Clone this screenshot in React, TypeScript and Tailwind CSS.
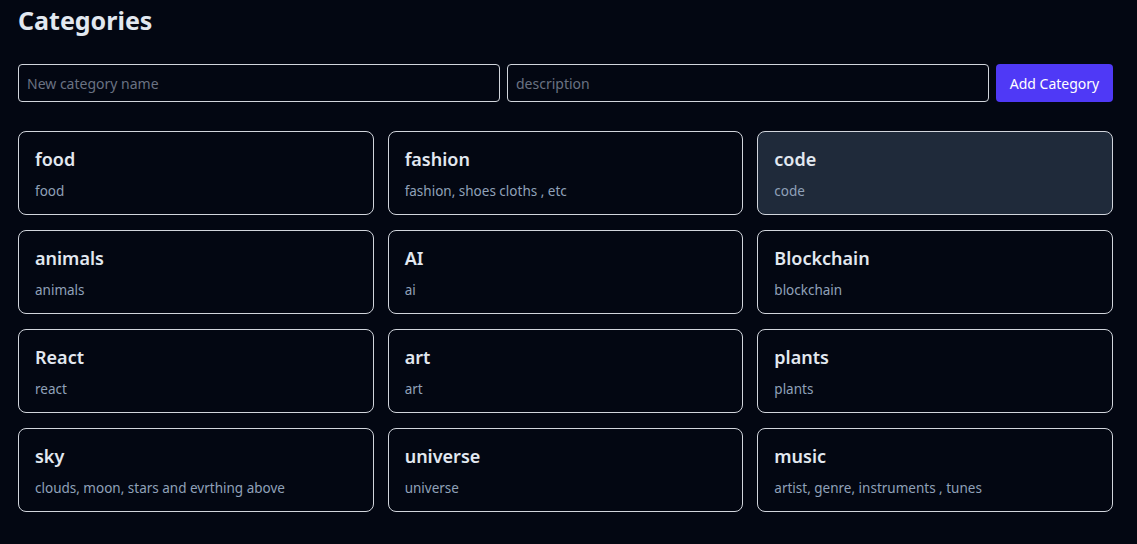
import React, { useState } from 'react';

interface CategoryI {
  name: string,
  description: string,
}

const categories: CategoryI[] = [
  { name: 'food', description: 'food' },
  { name: 'fashion', description: 'fashion, shoes cloths , etc' },
  { name: 'code', description: 'code' },
  { name: 'animals', description: 'animals' },
  { name: 'AI', description: 'ai' },
  { name: 'Blockchain', description: 'blockchain' },
  { name: 'React', description: 'react' },
  { name: 'art', description: 'art' },
  { name: 'plants', description: 'plants' },
  { name: 'sky', description: 'clouds, moon, stars and evrthing above' },
  { name: 'universe', description: 'universe' },
  { name: 'music', description: 'artist, genre, instruments , tunes' },
];

const App: React.FC = () => {
  const [name, setName] = useState('')
  const [description, setDescription] = useState('')

  return (
    <div className="min-h-screen bg-[#030712] pl-[18px] pr-[24px] pt-[4px] pb-8 font-['Noto_Sans',sans-serif]">
      <h1 className="text-[25px] leading-8 font-bold text-slate-200">Categories</h1>

      <div className="flex gap-[7px] mt-[28px]">
        <input
          className="flex-1 h-[38px] px-2 bg-transparent border border-gray-300 rounded text-sm text-gray-200 placeholder-gray-500 outline-none"
          placeholder="New category name"
          value={name}
          onChange={(e) => setName(e.target.value)}
        />
        <input
          className="flex-1 h-[38px] px-2 bg-transparent border border-gray-300 rounded text-sm text-gray-200 placeholder-gray-500 outline-none"
          placeholder="description"
          value={description}
          onChange={(e) => setDescription(e.target.value)}
        />
        <button className="h-[38px] w-[117px] pt-px bg-indigo-600 text-white text-sm rounded">Add Category</button>
      </div>

      <div className="grid grid-cols-3 gap-x-[14px] gap-y-[15px] mt-[29px]">
        {categories.map((c, i) => {
          return (
            <div
              key={i}
              className={`h-[84px] px-4 pt-[15px] border border-gray-300 rounded-lg ${c.name === 'code' ? 'bg-[#1f2a3a]' : 'bg-transparent'}`}
            >
              <div className="text-lg leading-6 font-semibold text-slate-200">{c.name}</div>
              <div className="text-[13.5px] leading-5 mt-[10px] text-slate-400">{c.description}</div>
            </div>
          )
        })}
      </div>
    </div>
  );
};

export default App;
